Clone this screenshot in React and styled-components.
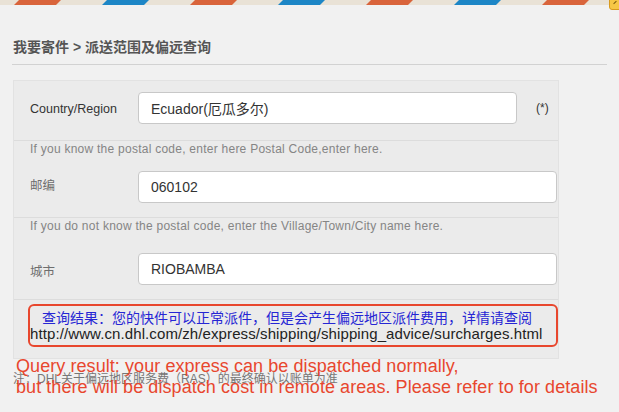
import React from "react";
import styled, { createGlobalStyle } from "styled-components";

const GlobalStyle = createGlobalStyle`
  html, body {
    margin: 0;
    padding: 0;
    background: #f1f1f1;
  }
  body {
    font-family: "Liberation Sans", "Noto Sans CJK SC", sans-serif;
    color: #333;
  }
`;

const Page = styled.div`
  width: 619px;
  height: 412px;
  overflow: hidden;
  background: #f1f1f1;
`;

const Airmail = styled.div`
  position: relative;
  height: 5px;
  background: #e9e2d6;
  svg {
    display: block;
  }
`;

const Badge = styled.div`
  position: absolute;
  left: 609px;
  top: -3px;
  width: 13px;
  height: 13px;
  box-sizing: border-box;
  border: 1px solid #d99a1e;
  border-radius: 3px;
  background: #f6c746;
  &::after {
    content: "";
    position: absolute;
    left: 3px;
    top: 4px;
    width: 4px;
    height: 1px;
    background: #7a5a10;
    transform: rotate(-45deg);
  }
`;

const Content = styled.div`
  padding: 0 12px;
`;

const Heading = styled.h1`
  margin: 32px 0 0;
  padding: 0 0 7px 1px;
  font-size: 14px;
  line-height: 20px;
  font-weight: bold;
  color: #555;
  border-bottom: 1px solid #d2d2d2;
`;

const Panel = styled.div`
  margin: 15px 0 0 1px;
  width: 546px;
  box-sizing: border-box;
  background: #ebebeb;
  border: 1px solid #e2e2e2;
`;

const Section = styled.div`
  border-bottom: 1px solid #dcdcdc;
  padding-bottom: 14px;
`;

const FirstSection = styled(Section)`
  padding-top: 11px;
  padding-bottom: 16px;
`;

const Hint = styled.div`
  padding-left: 16px;
  font-size: 12px;
  line-height: 16px;
  color: #858585;
  letter-spacing: 0.25px;
  margin-bottom: ${(p) => p.$gap}px;
`;

const FieldRow = styled.div`
  display: flex;
  align-items: center;
  padding-left: 16px;
`;

const Label = styled.label`
  width: 108px;
  flex: none;
  font-size: 12.5px;
  color: ${(p) => (p.$muted ? "#6e6e6e" : "#333")};
  margin-top: ${(p) => (p.$raised ? -6 : 2)}px;
`;

const TextInput = styled.input`
  width: ${(p) => p.$width}px;
  height: 32px;
  box-sizing: border-box;
  margin: 0;
  padding: 0 12px;
  border: 1px solid #c8c8c8;
  border-radius: 4px;
  background: #fff;
  font-family: "Liberation Sans", "Noto Sans CJK SC", sans-serif;
  font-size: 14px;
  color: #333;
  outline: none;
`;

const Required = styled.span`
  margin-left: 19px;
  font-size: 12px;
  color: #333;
`;

const ResultSection = styled.div`
  padding: 4px 0 11px 14px;
`;

const ResultBox = styled.div`
  border: 2px solid #e8472e;
  border-radius: 6px;
  padding: 5px 0 4px;
  line-height: 15px;
`;

const ResultLine = styled.div`
  padding-left: ${(p) => p.$indent}px;
  color: ${(p) => p.$color};
  font-size: ${(p) => p.$size}px;
  letter-spacing: ${(p) => p.$spacing || 0}px;
  white-space: nowrap;
`;

const Footer = styled.div`
  position: relative;
  padding-top: 12px;
`;

const Note = styled.div`
  padding-left: 1px;
  font-size: 12px;
  line-height: 16px;
  color: #777;
`;

const Annotation = styled.div`
  position: absolute;
  left: 4px;
  top: -3px;
  font-size: 18px;
  line-height: 21px;
  letter-spacing: 0.07px;
  color: #e8472e;
  white-space: nowrap;
`;

function Stripes() {
  return (
    <svg width="619" height="5" viewBox="0 0 619 5">
      <defs>
        <pattern id="air" width="176" height="5" patternUnits="userSpaceOnUse" x="0" y="0">
          <polygon points="14,5 56,5 61,0 19,0" fill="#d9643b" />
          <polygon points="102,5 144,5 149,0 107,0" fill="#1d86c6" />
        </pattern>
      </defs>
      <rect width="619" height="5" fill="url(#air)" />
    </svg>
  );
}

export default function App() {
  return (
    <Page>
      <GlobalStyle />
      <Airmail>
        <Stripes />
        <Badge />
      </Airmail>
      <Content>
        <Heading>我要寄件 &gt; 派送范围及偏远查询</Heading>
        <Panel>
          <FirstSection>
            <FieldRow>
              <Label>Country/Region</Label>
              <TextInput $width={379} readOnly defaultValue="Ecuador(厄瓜多尔)" />
              <Required>(*)</Required>
            </FieldRow>
          </FirstSection>
          <Section>
            <Hint $gap={14}>If you know the postal code, enter here Postal Code,enter here.</Hint>
            <FieldRow>
              <Label $muted $raised>邮编</Label>
              <TextInput $width={419} readOnly defaultValue="060102" />
            </FieldRow>
          </Section>
          <Section>
            <Hint $gap={19}>
              If you do not know the postal code, enter the Village/Town/City name here.
            </Hint>
            <FieldRow>
              <Label $muted>城市</Label>
              <TextInput $width={419} readOnly defaultValue="RIOBAMBA" />
            </FieldRow>
          </Section>
          <ResultSection>
            <ResultBox>
              <ResultLine $indent={12} $color="#2626d4" $size={14}>
                查询结果：您的快件可以正常派件，但是会产生偏远地区派件费用，详情请查阅
              </ResultLine>
              <ResultLine $indent={0} $color="#222" $size={15} $spacing={0.1}>
                http://www.cn.dhl.com/zh/express/shipping/shipping_advice/surcharges.html
              </ResultLine>
            </ResultBox>
          </ResultSection>
        </Panel>
        <Footer>
          <Note>注：DHL关于偏远地区服务费（RAS）的最终确认以账单为准</Note>
          <Annotation>
            Query result: your express can be dispatched normally,
            <br />
            but there will be dispatch cost in remote areas. Please refer to for details
          </Annotation>
        </Footer>
      </Content>
    </Page>
  );
}
